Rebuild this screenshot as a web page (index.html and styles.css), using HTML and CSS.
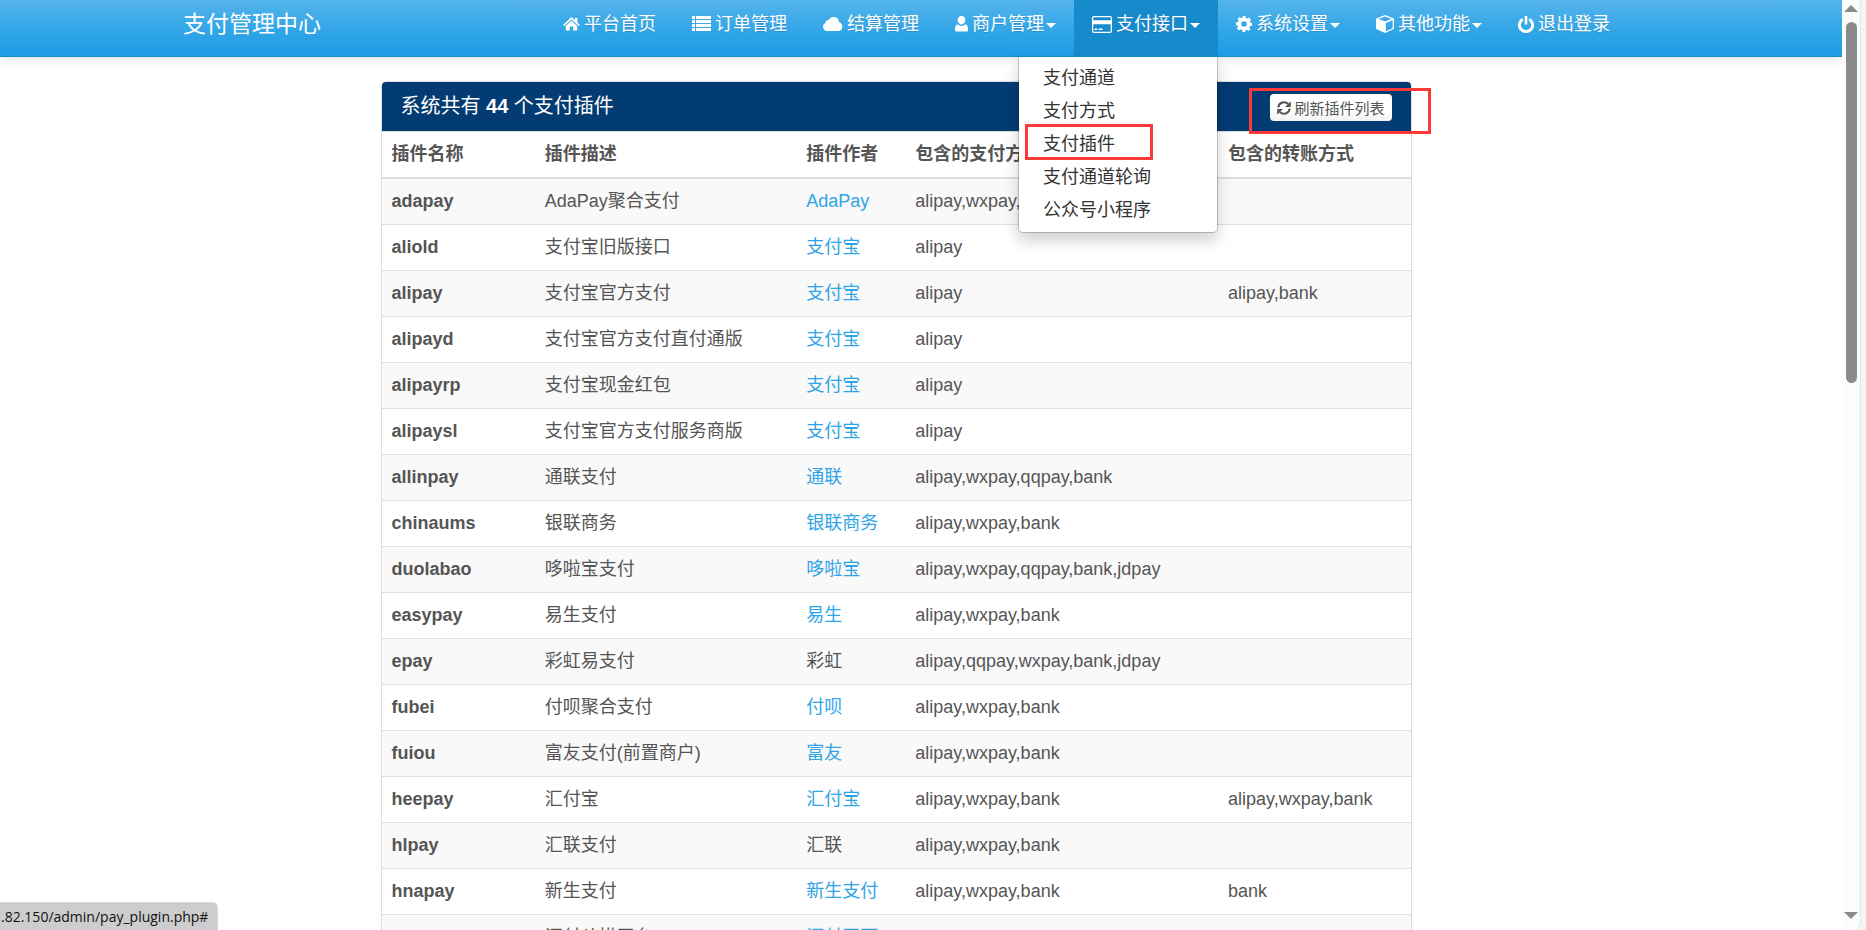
FILE: index.html
```html
<!DOCTYPE html>
<html lang="zh-CN">
<head>
<meta charset="utf-8">
<title>支付管理中心</title>
<link rel="stylesheet" href="styles.css">
</head>
<body>
<header class="navbar">
  <div class="navbar-inner">
    <a class="brand" href="#">支付管理中心</a>
    <nav>
      <ul class="nav">
        <li><a href="#"><svg class="icon" viewBox="0 0 17 16" width="17" height="16"><path d="M8.500 1L0 9l1.300 1L8.500 3.400l7.200 6.600L17 9l-2.600-2.500V2H12v2.200zM8.500 4.800L2.800 10v4.500h4V10.500h3.400v4h4V10z"/></svg>平台首页</a></li>
        <li><a href="#"><svg class="icon" viewBox="0 0 19 16" width="19" height="16"><path d="M0 0h3v3H0zM4 0h15v3H4zM0 4h3v3H0zM4 4h15v3H4zM0 8h3v3H0zM4 8h15v3H4zM0 12h3v3H0zM4 12h15v3H4z"/></svg>订单管理</a></li>
        <li><a href="#"><svg class="icon" viewBox="0 0 20 16" width="20" height="16"><path d="M4.500 15A4.300 4.300 0 0 1 2.300 6.900 3 3 0 0 1 5.800 4 5.300 5.300 0 0 1 15.900 6.200 4.500 4.500 0 0 1 15.500 15z"/></svg>结算管理</a></li>
        <li><a href="#"><svg class="icon" viewBox="0 0 13 16" width="13" height="16"><path d="M6.500 0C9 0 10.300 1.700 10.300 4S8.800 8.500 6.500 8.500 2.700 6.300 2.700 4 4 0 6.500 0zM2.500 8.200a5.600 5.600 0 0 0 8 0C12.300 9 13 10.500 13 13v1.500a1 1 0 0 1-1 1H1a1 1 0 0 1-1-1V13c0-2.500.7-4 2.500-4.800z"/></svg>商户管理<span class="caret"></span></a></li>
        <li class="active"><a href="#"><svg class="icon" viewBox="0 0 20 17" width="20" height="17"><path fill-rule="evenodd" d="M2 0h16a2 2 0 0 1 2 2v13a2 2 0 0 1-2 2H2a2 2 0 0 1-2-2V2a2 2 0 0 1 2-2zm0 1.300a.7.7 0 0 0-.7.700v2.300h17.400V2a.7.7 0 0 0-.7-.7zM1.300 8.300V15c0 .4.300.7.700.7h16c.4 0 .7-.3.700-.7V8.300zM2.600 12.500h2.600V14H2.600zm4 0h4V14h-4z"/></svg>支付接口<span class="caret"></span></a>
          <ul class="dropdown">
            <li><a href="#">支付通道</a></li>
            <li><a href="#">支付方式</a></li>
            <li class="marked"><a href="#">支付插件</a></li>
            <li><a href="#">支付通道轮询</a></li>
            <li><a href="#">公众号小程序</a></li>
          </ul>
        </li>
        <li><a href="#"><svg class="icon" viewBox="0 0 16 16" width="16" height="16"><path fill-rule="evenodd" d="M6.600 0h2.800l.5 2.200 1.200.5L13 1.500l2 2-1.200 1.900.5 1.200 1.700.4v2.800l-2.200.5-.5 1.200L14.500 13l-2 2-1.900-1.200-1.200.5L9 16H6.600l-.5-2.200-1.200-.5L3 14.500l-2-2 1.200-1.900-.5-1.200L0 9.400V6.600l2.200-.5.5-1.200L1.500 3l2-2 1.900 1.200 1.200-.5zM8 5.200a2.800 2.800 0 1 0 0 5.600 2.800 2.800 0 0 0 0-5.600z"/></svg>系统设置<span class="caret"></span></a></li>
        <li><a href="#"><svg class="icon" viewBox="0 0 18 18" width="18" height="18"><path fill-rule="evenodd" d="M9 0l8.300 3.200.7.900v9.300l-.7.900L9 18 .7 14.300 0 13.400V4.100l.7-.9zm0 1.400L2.500 4 9 6.600 15.500 4zm7.600 3.800L9.800 8v8.200l6.800-3z"/></svg>其他功能<span class="caret"></span></a></li>
        <li><a href="#"><svg class="icon" viewBox="0 0 16 17" width="16" height="17"><path class="stroke bold" d="M4.700 3.300a6.600 6.600 0 1 0 6.600 0"/><path d="M6.700 0h2.600v8.500H6.700z"/></svg>退出登录</a></li>
      </ul>
    </nav>
  </div>
</header>

<div class="content">
<main class="panel">
  <div class="panel-heading">
    <h1>系统共有 <b>44</b> 个支付插件</h1>
    <div class="refresh">
      <button type="button"><svg viewBox="0 0 14 14" width="14" height="14"><path class="stroke" d="M1.300 6.300A5.700 5.700 0 0 1 11.200 3.200M12.700 7.700A5.700 5.700 0 0 1 2.800 10.800"/><path d="M13.800.3v5.700H8.100zM.2 13.700V8h5.700z"/></svg>刷新插件列表</button>
    </div>
  </div>
  <table>
    <colgroup><col class="c-name"><col class="c-desc"><col class="c-author"><col class="c-pay"><col></colgroup>
    <thead><tr><th>插件名称</th><th>插件描述</th><th>插件作者</th><th>包含的支付方式</th><th>包含的转账方式</th></tr></thead>
    <tbody>
      <tr><th>adapay</th><td>AdaPay聚合支付</td><td><a href="#">AdaPay</a></td><td>alipay,wxpay,bank</td><td></td></tr>
      <tr><th>aliold</th><td>支付宝旧版接口</td><td><a href="#">支付宝</a></td><td>alipay</td><td></td></tr>
      <tr><th>alipay</th><td>支付宝官方支付</td><td><a href="#">支付宝</a></td><td>alipay</td><td>alipay,bank</td></tr>
      <tr><th>alipayd</th><td>支付宝官方支付直付通版</td><td><a href="#">支付宝</a></td><td>alipay</td><td></td></tr>
      <tr><th>alipayrp</th><td>支付宝现金红包</td><td><a href="#">支付宝</a></td><td>alipay</td><td></td></tr>
      <tr><th>alipaysl</th><td>支付宝官方支付服务商版</td><td><a href="#">支付宝</a></td><td>alipay</td><td></td></tr>
      <tr><th>allinpay</th><td>通联支付</td><td><a href="#">通联</a></td><td>alipay,wxpay,qqpay,bank</td><td></td></tr>
      <tr><th>chinaums</th><td>银联商务</td><td><a href="#">银联商务</a></td><td>alipay,wxpay,bank</td><td></td></tr>
      <tr><th>duolabao</th><td>哆啦宝支付</td><td><a href="#">哆啦宝</a></td><td>alipay,wxpay,qqpay,bank,jdpay</td><td></td></tr>
      <tr><th>easypay</th><td>易生支付</td><td><a href="#">易生</a></td><td>alipay,wxpay,bank</td><td></td></tr>
      <tr><th>epay</th><td>彩虹易支付</td><td>彩虹</td><td>alipay,qqpay,wxpay,bank,jdpay</td><td></td></tr>
      <tr><th>fubei</th><td>付呗聚合支付</td><td><a href="#">付呗</a></td><td>alipay,wxpay,bank</td><td></td></tr>
      <tr><th>fuiou</th><td>富友支付(前置商户)</td><td><a href="#">富友</a></td><td>alipay,wxpay,bank</td><td></td></tr>
      <tr><th>heepay</th><td>汇付宝</td><td><a href="#">汇付宝</a></td><td>alipay,wxpay,bank</td><td>alipay,wxpay,bank</td></tr>
      <tr><th>hlpay</th><td>汇联支付</td><td>汇联</td><td>alipay,wxpay,bank</td><td></td></tr>
      <tr><th>hnapay</th><td>新生支付</td><td><a href="#">新生支付</a></td><td>alipay,wxpay,bank</td><td>bank</td></tr>
      <tr><th>huifu</th><td>汇付斗拱平台</td><td><a href="#">汇付天下</a></td><td>alipay,wxpay,bank</td><td></td></tr>
    </tbody>
  </table>
</main>
</div>

<div class="status">.82.150/admin/pay_plugin.php#</div>
<div class="scroll-edge"><div class="scrollbar">
  <svg viewBox="0 0 14 7" width="14" height="7"><path d="M7 0l7 7H0z"/></svg>
  <div class="track"><div class="thumb"></div></div>
  <svg viewBox="0 0 14 7" width="14" height="7"><path d="M0 0h14L7 7z"/></svg>
</div></div>
</body>
</html>
```

FILE: styles.css
```css
* { box-sizing: border-box; }

body {
  margin: 0;
  height: 100vh;
  padding-right: 24px;
  overflow: hidden;
  background: #fff;
  color: #555;
  font-family: "Liberation Sans", "Noto Sans CJK SC", sans-serif;
  font-size: 18px;
  line-height: 25px;
}

a { color: #2fa4e7; text-decoration: none; }
ul { list-style: none; margin: 0; padding: 0; }
svg { fill: currentColor; }
.stroke { fill: none; stroke: currentColor; stroke-width: 2; }
.bold { stroke-width: 3; }

.navbar {
  position: relative;
  z-index: 1;
  background: linear-gradient(#54b4eb, #2fa4e7 60%, #1d9ce5);
  border-bottom: 1px solid #178acc;
  box-shadow: 0 1px 12px rgba(0, 0, 0, 0.12);
}
.navbar-inner {
  display: flex;
  justify-content: space-between;
  max-width: 1476px;
  margin: 0 auto;
  padding-right: 31px;
}
.brand { padding: 12px 0 0; color: #fff; font-size: 23px; }
.nav { display: flex; }
.nav > li { position: relative; }
.nav > li > a {
  display: flex;
  align-items: center;
  height: 56px;
  padding: 0 18px 8px;
  color: #fff;
  white-space: nowrap;
  text-shadow: 0 1px 0 rgba(0, 0, 0, 0.15);
}
.nav > .active > a { background: #178acc; }
.icon { flex: none; margin-right: 4px; }
.caret {
  margin: 2px 0 0 2px;
  border: 5px solid transparent;
  border-top-color: #fff;
  border-bottom: 0;
}

.dropdown {
  position: absolute;
  top: 57px;
  right: 0;
  width: 200px;
  padding: 5px 0;
  background: #fff;
  border: 1px solid rgba(0, 0, 0, 0.2);
  border-top: 0;
  border-radius: 0 0 5px 5px;
  background-clip: padding-box;
  box-shadow: 0 8px 15px rgba(0, 0, 0, 0.18);
}
.dropdown a { display: block; padding: 4px 24px; color: #333; }
.dropdown li { position: relative; }
.marked::after {
  content: "";
  position: absolute;
  inset: -4px 64px 1px 6px;
  border: 3px solid #fa3939;
}

.content { padding: 24px 50px 0 0; }
.panel {
  width: 1031px;
  max-width: 100%;
  margin: 0 auto;
  border: 1px solid #ddd;
  border-radius: 5px;
}
.panel-heading {
  display: flex;
  justify-content: space-between;
  align-items: center;
  height: 50px;
  padding: 0 19px;
  background: #033c73;
  border-bottom: 1px solid #ddd;
  border-radius: 4px 4px 0 0;
  color: #fff;
}
h1 { margin: 0; font-size: 20px; font-weight: 400; }
.refresh { position: relative; margin-top: 2px; }
.refresh::after {
  content: "";
  position: absolute;
  inset: -6px -39px -13px -21px;
  border: 3px solid #fa3939;
  pointer-events: none;
}
button {
  display: flex;
  align-items: center;
  gap: 3px;
  height: 27px;
  padding: 0 7px;
  border: 0;
  border-radius: 4px;
  background: linear-gradient(#fff 60%, #f2f2f2);
  color: #555;
  font: 15px "Liberation Sans", "Noto Sans CJK SC", sans-serif;
}

table { width: 100%; border-collapse: separate; border-spacing: 0; table-layout: fixed; }
.c-name { width: 14.9%; }
.c-desc { width: 25.4%; }
.c-author { width: 10.6%; }
.c-pay { width: 30.4%; }
th, td { padding: 9px 10px 10px; text-align: left; white-space: nowrap; }
tbody th, tbody td { height: 46px; border-top: 1px solid #ddd; }
thead th { height: 45px; }
tbody tr:first-child > * { border-top-width: 2px; height: 47px; }
tbody tr:nth-child(odd) { background: #f9f9f9; }

.status {
  position: fixed;
  left: 0;
  bottom: 0;
  height: 28px;
  padding: 0 9px 0 1px;
  border: 1px solid #dadada;
  border-width: 1px 1px 0 0;
  border-radius: 0 5px 0 0;
  background: #cdcdcd;
  color: #111;
  font: 14px/27px "Open Sans", sans-serif;
}
.scroll-edge {
  position: fixed;
  z-index: 2;
  top: 0;
  right: 0;
  bottom: 0;
  width: 24px;
  padding-right: 5px;
  background: #f5f5f5;
}
.scrollbar {
  display: flex;
  flex-direction: column;
  align-items: center;
  height: 100%;
  padding: 5px 0 11px;
  background: #fcfcfc;
  border-right: 1px solid #e6e6e6;
  border-radius: 0 3px 8px 0;
  color: #8b8b8b;
}
.track { flex: 1; padding: 10px 0; }
.thumb { width: 11px; height: 41%; border-radius: 6px; background: #8b8b8b; }
```
